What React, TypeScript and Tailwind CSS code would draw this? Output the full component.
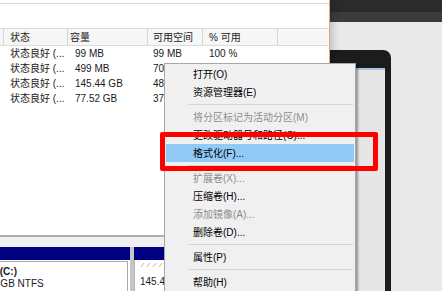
import React from 'react';

type Item = { label: string; disabled?: boolean; active?: boolean } | 'sep';

const menu: Item[] = [
  { label: '打开(O)' },
  { label: '资源管理器(E)' },
  'sep',
  { label: '将分区标记为活动分区(M)', disabled: true },
  { label: '更改驱动器号和路径(C)...' },
  { label: '格式化(F)...', active: true },
  'sep',
  { label: '扩展卷(X)...', disabled: true },
  { label: '压缩卷(H)...' },
  { label: '添加镜像(A)...', disabled: true },
  { label: '删除卷(D)...' },
  'sep',
  { label: '属性(P)' },
  'sep',
  { label: '帮助(H)' },
];

const rows = [
  ['状态良好 (...', '99 MB', '99 MB', '100 %'],
  ['状态良好 (...', '499 MB', '70 MB', '14 %'],
  ['状态良好 (...', '145.44 GB', '48.21 GB', '33 %'],
  ['状态良好 (...', '77.52 GB', '37.90 GB', '49 %'],
];

function Hatch() {
  return (
    <svg width="30" height="6" className="block">
      {[0, 6, 12, 18, 24].map((x) => (
        <line key={x} x1={x + 1} y1="5" x2={x + 4} y2="1" stroke="#a8a8a8" strokeWidth="0.8" />
      ))}
    </svg>
  );
}

export default function App() {
  return (
    <div className="relative w-[442px] h-[291px] overflow-hidden bg-[#e9e9e9] font-['Liberation_Sans','Noto_Sans_CJK_SC',sans-serif] text-[10px] text-[#1a1a1a]">
      {/* desktop behind */}
      <div className="h-[12px] bg-[#2b2b2b]" />
      <div className="h-[10px] bg-[#3b3b3b]" />

      {/* other device frame */}
      <div className="absolute top-[50px] left-[240px] w-[151px] h-[260px] rounded-[8px] bg-[#1c1c1c] pt-[18px] px-[6px]">
        <div className="h-full bg-[#e6e6e6] border-t-2 border-[#aac5e4]" />
      </div>

      {/* disk management window */}
      <div className="absolute top-0 left-0 w-[330px] h-[291px] bg-white border-r border-[#e9a566] shadow-[3px_0_8px_rgba(0,0,0,0.18)] flex flex-col">
        <div className="h-[4px] border-b border-[#d6d6d6]" />
        <div className="h-[24px]" />
        <div className="h-[18px] flex items-center bg-[#f6f6f6] border-y border-[#dcdcdc]">
          <div className="w-[4px] h-full border-r border-[#d4d4d4]" />
          <div className="w-[64px] h-full border-r border-[#d4d4d4] pl-[6px] flex items-center">状态</div>
          <div className="w-[80px] h-full border-r border-[#d4d4d4] pl-[2px] flex items-center">容量</div>
          <div className="w-[55px] h-full border-r border-[#d4d4d4] pl-[5px] flex items-center">可用空间</div>
          <div className="w-[75px] h-full border-r border-[#d4d4d4] pl-[6px] flex items-center">% 可用</div>
          <div className="flex-1" />
        </div>
        {rows.map((r, i) => (
          <div key={i} className="h-[15px] flex items-center">
            <div className="w-[4px]" />
            <div className="w-[64px] pl-[6px] whitespace-nowrap">{r[0]}</div>
            <div className="w-[80px] pl-[7px] whitespace-nowrap">{r[1]}</div>
            <div className="w-[55px] pl-[5px] whitespace-nowrap">{r[2]}</div>
            <div className="w-[75px] pl-[6px] whitespace-nowrap">{r[3]}</div>
          </div>
        ))}
        <div className="h-[129px]" />
        <div className="h-[12px] bg-[#f0f0f0] border-t-2 border-[#adadad]" />
        <div className="flex-1 flex">
          <div className="w-[130px] flex flex-col">
            <div className="h-[13px] bg-[#000080]" />
            <div className="flex-1 bg-white border-t border-r border-[#a9a9a9] mt-[1px] mr-[2px] pt-[4px] overflow-hidden">
              <div className="-ml-[33px] leading-[12px] whitespace-nowrap">
                <div className="font-bold">新加卷 (C:)</div>
                <div>145.44 GB NTFS</div>
              </div>
            </div>
          </div>
          <div className="w-[4px] bg-[#c6c6c6]" />
          <div className="flex-1 flex flex-col">
            <div className="h-[13px] bg-[#000080]" />
            <div className="flex-1 bg-white border-l border-[#b5b5b5] pt-[2px] pl-[5px] leading-[12px] whitespace-nowrap">
              <Hatch />
              <div className="h-[8px]" />
              <div>145.44 GB NTFS</div>
            </div>
          </div>
        </div>
      </div>

      {/* context menu */}
      <div className="absolute top-[63px] left-[164px] w-[192px] h-[240px] bg-[#f0f0f0] border border-[#a7a7a7] shadow-[2px_2px_2px_rgba(0,0,0,0.35)] py-[1px] text-black">
        {menu.map((m, i) =>
          m === 'sep' ? (
            <div key={i} className="h-[7px] flex items-center ml-[23px] mr-[2px]">
              <div className="w-full h-px bg-[#d5d5d5]" />
            </div>
          ) : (
            <div
              key={i}
              className={`h-[18px] ml-[1px] mr-[1px] pl-[27px] flex items-center whitespace-nowrap ${
                m.active ? 'bg-[#91c9f7]' : ''
              } ${m.disabled ? 'text-[#8d8d8d]' : ''}`}
            >
              {m.label}
            </div>
          )
        )}
      </div>

      {/* annotation */}
      <div className="absolute top-[132px] left-[160px] w-[218px] h-[39px] border-[5px] border-[#ff0000] rounded-[2px]" />
    </div>
  );
}
